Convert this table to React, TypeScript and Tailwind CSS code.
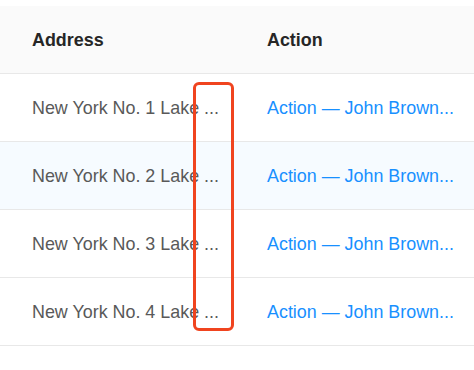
const rows = [1, 2, 3, 4].map((n) => ({
  key: n,
  address: `New York No. ${n} Lake ...`,
  action: 'Action — John Brown...',
}))

const App = () => {
  return (
    <div className="relative w-[474px] h-[370px] overflow-hidden bg-white pt-[6px] font-['Liberation_Sans',Arial,sans-serif] text-[17.9px]">
      <div className="grid grid-cols-[235px_1fr] h-[68px] items-center bg-[#fafafa] border-b border-[#e8e8e8] text-[#262626] font-semibold">
        <div className="pl-8 pt-[2px]">Address</div>
        <div className="pl-8 pt-[2px]">Action</div>
      </div>
      {rows.map((row) => (
        <div
          key={row.key}
          className={`grid grid-cols-[235px_1fr] h-[68px] items-center border-b border-[#e8e8e8] ${row.key === 2 ? 'bg-[#f6fbff]' : 'bg-white'}`}
        >
          <div className="pl-8 pt-[2px] text-[#595959] whitespace-nowrap overflow-hidden">{row.address}</div>
          <div className="pl-8 pt-[2px] text-[#1890ff] whitespace-nowrap overflow-hidden">{row.action}</div>
        </div>
      ))}

      {/* highlight box over the clipped ellipses */}
      <div className="absolute left-[193px] top-[82px] w-[41px] h-[249px] border-[3px] border-[#f0441f] rounded-[6px]" />
    </div>
  )
}

export default App
